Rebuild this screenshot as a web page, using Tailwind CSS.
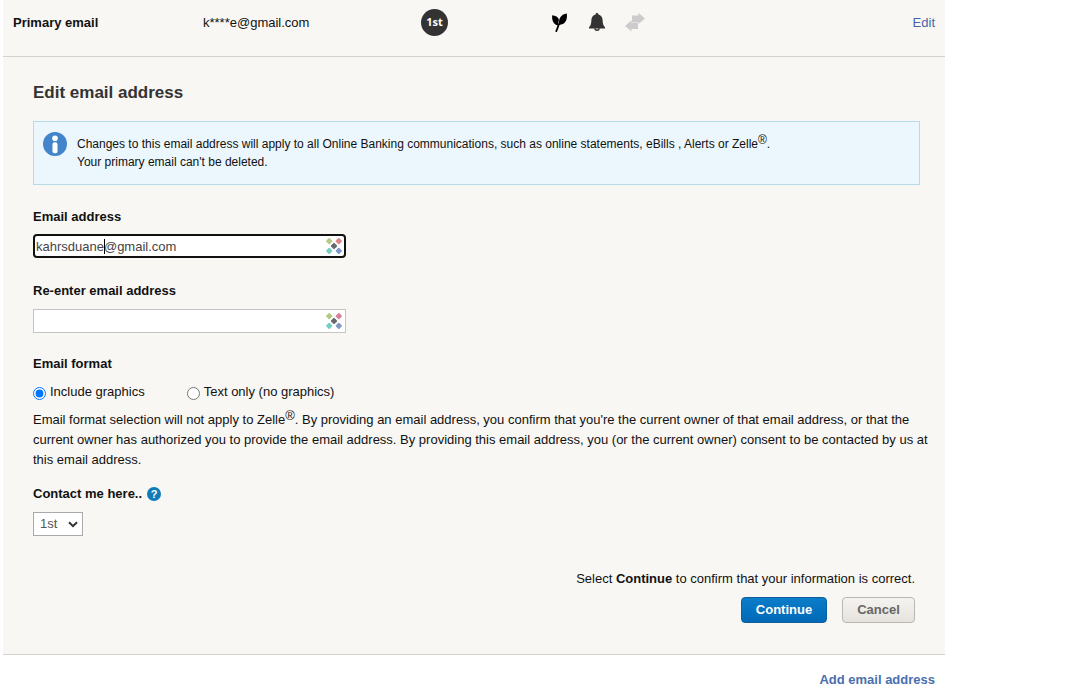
<!DOCTYPE html>
<html lang="en">
<head>
  <meta charset="UTF-8">
  <meta name="viewport" content="width=device-width, initial-scale=1">
  <title>Edit email address</title>
  <script src="https://cdn.jsdelivr.net/npm/@tailwindcss/browser@4"></script>
</head>
<body class="bg-white text-[13px] leading-5 text-[#111] font-['Liberation_Sans',Arial,sans-serif] overflow-x-hidden">
  <main class="ml-[3px] w-full max-w-[942px]">

    <!-- Primary email row -->
    <div class="flex items-center bg-[#f8f7f3] border-b border-[#d3d2ce] h-[57px] pl-[10px] pr-[10px] pb-3">
      <h2 class="w-[190px] shrink-0 pt-[2px] font-bold">Primary email</h2>
      <span class="w-[218px] shrink-0 pt-[2px]">k****e@gmail.com</span>
      <span class="size-[27px] shrink-0 rounded-full bg-[#333] text-white font-bold text-[11px] leading-[26px] text-center font-['Open_Sans',sans-serif]">1st</span>
      <div class="flex items-center gap-[18px] ml-[102px]">
        <svg class="w-5 h-5" viewBox="0 0 20 20" role="img" aria-label="Paperless">
          <path d="M7.800 13.300C3.800 12.500 1.600 8.600 2.200 3.200 5.500 3.600 8 5 8.900 7.400c-.2 2.200-.6 4.100-1.100 5.900z" fill="#000"/>
          <path d="M9 13C8.600 6.800 10.500 2.600 16.800 1.600c.9 6.600-1.600 11.200-7.800 11.400z" fill="#000"/>
          <path d="M9 11.500C8.200 14.500 7.300 17 6 19.800" stroke="#000" stroke-width="1.800" fill="none"/>
        </svg>
        <svg class="w-[18px] h-5" viewBox="0 0 18 20" role="img" aria-label="Alerts">
          <path d="M9 1c.9 0 1.400.6 1.400 1.500 2.700.6 4.100 2.700 4.200 5.500.1 4 .8 5.600 2.400 7.200v1.300H1v-1.300C2.600 13.600 3.300 12 3.400 8c.1-2.800 1.500-4.900 4.200-5.500C7.600 1.600 8.100 1 9 1z" fill="#333"/>
          <path d="M7 16.200a2 2 0 0 0 4 0" fill="none" stroke="#333" stroke-width="1.500"/>
        </svg>
        <svg class="w-[22px] h-5" viewBox="0 0 22 20" role="img" aria-label="Transfers">
          <path d="M8 3.500h6.500V.8L21 6.500 14.500 12V10H8zM14 17H7.500v2.500L1 13.900 7.500 8.200v2.300H14z" fill="#ccc"/>
        </svg>
      </div>
      <a href="#" class="ml-auto pt-[2px] text-[#4764b0]">Edit</a>
    </div>

    <!-- Edit form -->
    <form class="bg-[#f8f7f3] border-b border-[#d3d2ce] pl-[30px] pr-[10px] pt-[26px] pb-[31px]">
      <h1 class="text-[17px] leading-5 font-bold text-[#333]">Edit email address</h1>

      <div class="flex gap-[10px] mt-[18px] mr-[15px] h-16 border border-[#b5dbe6] bg-[#ebf6fd] pl-[9px] pt-[10px]">
        <svg class="size-6 shrink-0" viewBox="0 0 24 24" aria-hidden="true">
          <circle cx="12" cy="12" r="12" fill="#4385cb"/>
          <circle cx="12" cy="6.200" r="2.800" fill="#fff"/>
          <rect x="9.500" y="10.300" width="5" height="11" rx="2" fill="#fff"/>
        </svg>
        <p class="text-xs leading-[18px] pt-[3px]">Changes to this email address will apply to all Online Banking communications, such as online statements, eBills , Alerts or Zelle<sup class="text-xs leading-none -top-1">®</sup>.<br>Your primary email can't be deleted.</p>
      </div>

      <label for="email" class="block w-fit mt-[22px] font-bold">Email address</label>
      <div class="relative mt-[7px] w-[313px]">
        <input id="email" type="text" value="kahrsduane@gmail.com" class="block w-full h-6 border-2 border-[#111] rounded-[4px] bg-white pl-px pr-6 text-[#444]">
        <span class="absolute left-[71px] top-[5px] w-px h-[15px] bg-black"></span>
        <svg class="absolute right-1 top-1 size-4" viewBox="0 0 16 16" aria-hidden="true">
          <path d="M3.200 1 5.400 3.200 3.200 5.400 1 3.200z" fill="#b5cb83" stroke="#b5cb83" stroke-width="1.800" stroke-linejoin="round"/>
          <path d="M12.800 1 15 3.200 12.800 5.400 10.600 3.200z" fill="#db8489" stroke="#db8489" stroke-width="1.800" stroke-linejoin="round"/>
          <path d="M8 5.800 10.200 8 8 10.200 5.800 8z" fill="#666a70" stroke="#666a70" stroke-width="1.800" stroke-linejoin="round"/>
          <path d="M3.200 10.600 5.400 12.800 3.200 15 1 12.800z" fill="#76d0c2" stroke="#76d0c2" stroke-width="1.800" stroke-linejoin="round"/>
          <path d="M12.800 10.600 15 12.800 12.800 15 10.600 12.800z" fill="#7c97cb" stroke="#7c97cb" stroke-width="1.800" stroke-linejoin="round"/>
        </svg>
      </div>

      <label for="email2" class="block w-fit mt-[23px] font-bold">Re-enter email address</label>
      <div class="relative mt-2 w-[313px]">
        <input id="email2" type="text" class="block w-full h-6 border border-[#c4c4c4] bg-white pl-px pr-6 text-[#444]">
        <svg class="absolute right-1 top-1 size-4" viewBox="0 0 16 16" aria-hidden="true">
          <path d="M3.200 1 5.400 3.200 3.200 5.400 1 3.200z" fill="#b5cb83" stroke="#b5cb83" stroke-width="1.800" stroke-linejoin="round"/>
          <path d="M12.800 1 15 3.200 12.800 5.400 10.600 3.200z" fill="#d9809a" stroke="#d9809a" stroke-width="1.800" stroke-linejoin="round"/>
          <path d="M8 5.800 10.200 8 8 10.200 5.800 8z" fill="#666a70" stroke="#666a70" stroke-width="1.800" stroke-linejoin="round"/>
          <path d="M3.200 10.600 5.400 12.800 3.200 15 1 12.800z" fill="#76d0c2" stroke="#76d0c2" stroke-width="1.800" stroke-linejoin="round"/>
          <path d="M12.800 10.600 15 12.800 12.800 15 10.600 12.800z" fill="#8199c4" stroke="#8199c4" stroke-width="1.800" stroke-linejoin="round"/>
        </svg>
      </div>

      <fieldset class="mt-[21px]">
        <legend class="font-bold">Email format</legend>
        <div class="flex gap-[42px] mt-2">
          <label class="flex items-center gap-1"><input type="radio" name="format" checked class="size-[13px] mt-[2px]">Include graphics</label>
          <label class="flex items-center gap-1"><input type="radio" name="format" class="size-[13px] mt-[2px]">Text only (no graphics)</label>
        </div>
      </fieldset>

      <p class="mt-2">Email format selection will not apply to Zelle<sup class="text-[13px] leading-none -top-1">®</sup>. By providing an email address, you confirm that you're the current owner of that email address, or that the current owner has authorized you to provide the email address. By providing this email address, you (or the current owner) consent to be contacted by us at this email address.</p>

      <div class="flex items-center gap-[5px] mt-[14px]">
        <label for="rank" class="font-bold">Contact me here..</label>
        <button type="button" class="size-[14px] rounded-full bg-[#0d7cb8] text-white text-[11px] leading-[14px] font-bold" aria-label="Help">?</button>
      </div>
      <div class="relative mt-2 w-[50px]">
        <select id="rank" class="block w-full h-6 appearance-none border border-[#a9a9a9] bg-white pl-[6px] text-[#555]">
          <option>1st</option>
          <option>2nd</option>
        </select>
        <svg class="absolute right-[5px] top-[9px] w-[10px] h-[7px] pointer-events-none" viewBox="0 0 10 7" aria-hidden="true">
          <path d="M1 1.200 5 5.200 9 1.200" fill="none" stroke="#333" stroke-width="2"/>
        </svg>
      </div>

      <div class="flex flex-col items-end mt-[33px] pr-5">
        <p>Select <b>Continue</b> to confirm that your information is correct.</p>
        <div class="flex gap-[15px] mt-2">
          <button type="submit" class="w-[86px] h-[26px] rounded-[4px] border border-[#0a5f9c] bg-linear-to-b from-[#0c7dc8] to-[#0069b8] text-white font-bold">Continue</button>
          <button type="button" class="w-[73px] h-[26px] rounded-[4px] border border-[#b9b7b2] bg-linear-to-b from-[#f5f3f0] to-[#e6e3dd] text-[#666] font-bold">Cancel</button>
        </div>
      </div>
    </form>

    <div class="flex justify-end mt-[15px] pr-[10px]">
      <a href="#" class="font-bold text-[#4a6fae]">Add email address</a>
    </div>
  </main>
</body>
</html>
